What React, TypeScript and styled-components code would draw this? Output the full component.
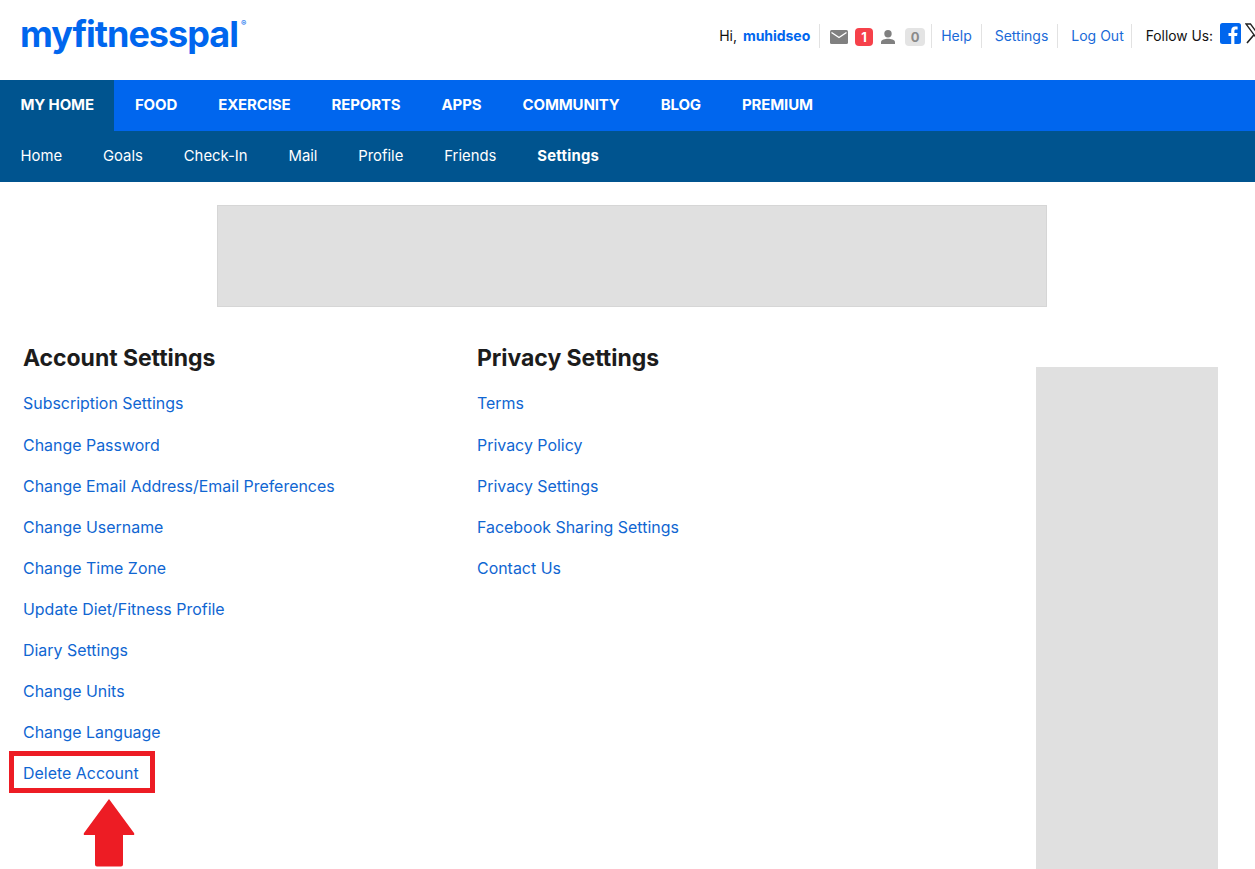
import React from 'react';
import styled, { createGlobalStyle } from 'styled-components';

const GlobalStyle = createGlobalStyle`
  html, body {
    margin: 0;
    padding: 0;
    height: 100%;
    overflow: hidden;
    background: #fff;
    font-family: Inter, "Noto Sans", sans-serif;
  }
  a {
    text-decoration: none;
  }
`;

const Page = styled.div`
  width: 1255px;
  height: 869px;
  overflow: hidden;
`;

const Header = styled.header`
  height: 80px;
  display: flex;
  justify-content: space-between;
  padding-left: 20px;
  box-sizing: border-box;
`;

const Logo = styled.div`
  display: flex;
  align-items: flex-start;
  color: #0066ee;
  font-size: 36px;
  font-weight: 700;
  letter-spacing: -1px;
  line-height: 45px;
  padding-top: 12px;
`;

const LogoMark = styled.span`
  font-size: 8px;
  font-weight: 500;
  line-height: 8px;
  margin: 7px 0 0 3px;
  letter-spacing: 0;
`;

const UserBar = styled.div`
  display: flex;
  align-items: center;
  height: 24px;
  margin-top: 24px;
  margin-right: -11px;
  font-size: 14px;
  color: #111;
  white-space: nowrap;
`;

const Greeting = styled.span`
  padding-right: 9px;
  border-right: 1px solid #e2e2e2;
  line-height: 24px;
`;

const UserName = styled.a`
  color: #0066ee;
  font-weight: 700;
  margin-left: 6px;
  font-size: 14px;
  letter-spacing: -0.05px;
`;

const Counters = styled.span`
  display: flex;
  align-items: center;
  padding: 1px 6px 0 10px;
  box-sizing: border-box;
  border-right: 1px solid #e2e2e2;
  height: 24px;
`;

const Badge = styled.span<{ $active?: boolean }>`
  width: ${(p) => (p.$active ? '18px' : '20px')};
  height: 18px;
  border-radius: 4px;
  display: flex;
  align-items: center;
  justify-content: center;
  font-size: 13px;
  font-weight: 700;
  margin: 0 ${(p) => (p.$active ? '8px' : '0')} 0 ${(p) => (p.$active ? '7px' : '10px')};
  color: ${(p) => (p.$active ? '#fff' : '#8a8a8a')};
  background: ${(p) => (p.$active ? '#f6414a' : '#e4e4e4')};
`;

const BarLink = styled.a<{ $last?: boolean }>`
  color: #1a6ad8;
  font-size: 14px;
  line-height: 24px;
  padding: 0 ${(p) => (p.$last ? '7px' : '9px')} 0 13px;
  border-right: 1px solid #e2e2e2;
  &:first-of-type {
    padding-left: 9px;
  }
`;

const FollowUs = styled.span`
  font-size: 13.8px;
  margin-left: 14px;
  margin-right: 7px;
`;

const SocialIcon = styled.svg`
  display: block;
  flex: none;
  margin-top: -6px;
`;

const XIcon = styled(SocialIcon)`
  margin-left: 4px;
`;

const MainNav = styled.nav`
  height: 51px;
  background: #0066ee;
  display: flex;
`;

const MainItem = styled.a<{ $active?: boolean }>`
  display: flex;
  align-items: center;
  padding: 0 20.5px 2px;
  color: #fff;
  font-size: 15px;
  font-weight: 700;
  letter-spacing: -0.13px;
  background: ${(p) => (p.$active ? '#00548f' : 'transparent')};
`;

const SubNav = styled.nav`
  height: 51px;
  background: #00548f;
  display: flex;
  padding-left: 20.5px;
  gap: 40.9px;
`;

const SubItem = styled.a<{ $active?: boolean }>`
  display: flex;
  align-items: center;
  padding-bottom: 2px;
  color: #fff;
  font-size: 14.85px;
  font-weight: ${(p) => (p.$active ? 700 : 400)};
  letter-spacing: ${(p) => (p.$active ? '0.25px' : '0')};
`;

const Banner = styled.div`
  width: 828px;
  height: 100px;
  margin: 23px 0 0 217px;
  background: #e0e0e0;
  border: 1px solid #d6d6d6;
`;

const Content = styled.main`
  display: flex;
  padding: 37px 0 0 23px;
`;

const Column = styled.section`
  width: 454px;
  flex: none;
`;

const RightColumn = styled(Column)`
  width: 559px;
`;

const Title = styled.h2`
  margin: 0 0 21px;
  font-size: 23px;
  font-weight: 700;
  line-height: 29px;
  color: #1c1c1c;
  letter-spacing: -0.05px;
`;

const LinkList = styled.ul`
  list-style: none;
  margin: 0;
  padding: 0;
  display: flex;
  flex-direction: column;
  gap: 21px;
`;

const LinkRow = styled.li`
  position: relative;
  font-size: 15.95px;
  line-height: 20px;
  width: max-content;
  &:first-child {
    margin-bottom: 1px;
  }
`;

const SettingLink = styled.a`
  color: #1066d2;
`;

const Highlight = styled.span`
  position: absolute;
  left: -14px;
  top: -13px;
  width: 146px;
  height: 42px;
  box-sizing: border-box;
  border: 5px solid #ed1c24;
`;

const Arrow = styled.svg`
  position: absolute;
  left: 60px;
  top: 35px;
`;

const SideAd = styled.aside`
  width: 182px;
  height: 502px;
  margin-top: 23px;
  flex: none;
  background: #e0e0e0;
`;

const mainItems = ['FOOD', 'EXERCISE', 'REPORTS', 'APPS', 'COMMUNITY', 'BLOG', 'PREMIUM'];
const subItems = ['Home', 'Goals', 'Check-In', 'Mail', 'Profile', 'Friends'];
const accountLinks = [
  'Subscription Settings',
  'Change Password',
  'Change Email Address/Email Preferences',
  'Change Username',
  'Change Time Zone',
  'Update Diet/Fitness Profile',
  'Diary Settings',
  'Change Units',
  'Change Language',
];
const privacyLinks = ['Terms', 'Privacy Policy', 'Privacy Settings', 'Facebook Sharing Settings', 'Contact Us'];

export default function App() {
  return (
    <Page>
      <GlobalStyle />
      <Header>
        <Logo>
          myfitnesspal
          <LogoMark>®</LogoMark>
        </Logo>
        <UserBar>
          <Greeting>
            Hi,<UserName href="#">muhidseo</UserName>
          </Greeting>
          <Counters>
            <svg width="18" height="14" viewBox="0 0 18 14">
              <rect width="18" height="14" rx="1.5" fill="#808080" />
              <path d="M1.5 2.5 9 7.5l7.5-5" fill="none" stroke="#fff" strokeWidth="1.4" />
            </svg>
            <Badge $active>1</Badge>
            <svg width="14" height="14" viewBox="0 0 14 14">
              <circle cx="7" cy="3.700" r="3.700" fill="#808080" />
              <path d="M0 14v-1.800C0 9.600 4.200 8.700 7 8.700s7 .9 7 3.500V14z" fill="#808080" />
            </svg>
            <Badge>0</Badge>
          </Counters>
          <BarLink href="#">Help</BarLink>
          <BarLink href="#">Settings</BarLink>
          <BarLink href="#" $last>
            Log Out
          </BarLink>
          <FollowUs>Follow Us:</FollowUs>
          <SocialIcon width="21" height="21" viewBox="0 0 21 21">
            <rect width="21" height="21" rx="2.5" fill="#0066ee" />
            <path
              d="M14.4 21v-8h2.7l.4-3.1h-3.1V8c0-.9.3-1.5 1.6-1.5h1.6V3.700c-.3 0-1.300-.1-2.400-.1-2.400 0-4 1.400-4 4.100v2.200H8.500V13h2.700v8z"
              fill="#fff"
            />
          </SocialIcon>
          <XIcon width="21" height="21" viewBox="0 0 21 21">
            <path d="M1 1h4.500l14 19H15z" fill="none" stroke="#222" strokeWidth="1.3" />
            <path d="M18.500 1 11.500 9M8.800 12 2 20" fill="none" stroke="#222" strokeWidth="1.6" />
          </XIcon>
        </UserBar>
      </Header>
      <MainNav>
        <MainItem href="#" $active>
          MY HOME
        </MainItem>
        {mainItems.map((item) => (
          <MainItem href="#" key={item}>
            {item}
          </MainItem>
        ))}
      </MainNav>
      <SubNav>
        {subItems.map((item) => (
          <SubItem href="#" key={item}>
            {item}
          </SubItem>
        ))}
        <SubItem href="#" $active>
          Settings
        </SubItem>
      </SubNav>
      <Banner />
      <Content>
        <Column>
          <Title>Account Settings</Title>
          <LinkList>
            {accountLinks.map((link) => (
              <LinkRow key={link}>
                <SettingLink href="#">{link}</SettingLink>
              </LinkRow>
            ))}
            <LinkRow>
              <SettingLink href="#">Delete Account</SettingLink>
              <Highlight />
              <Arrow width="52" height="68" viewBox="0 0 52 68">
                <path
                  d="M26 0 51 34Q52 36 50 36H40V65.500Q40 67.500 38 67.500H14Q12 67.500 12 65.500V36H2Q0 36 1 34Z"
                  fill="#ed1c24"
                />
              </Arrow>
            </LinkRow>
          </LinkList>
        </Column>
        <RightColumn>
          <Title>Privacy Settings</Title>
          <LinkList>
            {privacyLinks.map((link) => (
              <LinkRow key={link}>
                <SettingLink href="#">{link}</SettingLink>
              </LinkRow>
            ))}
          </LinkList>
        </RightColumn>
        <SideAd />
      </Content>
    </Page>
  );
}
